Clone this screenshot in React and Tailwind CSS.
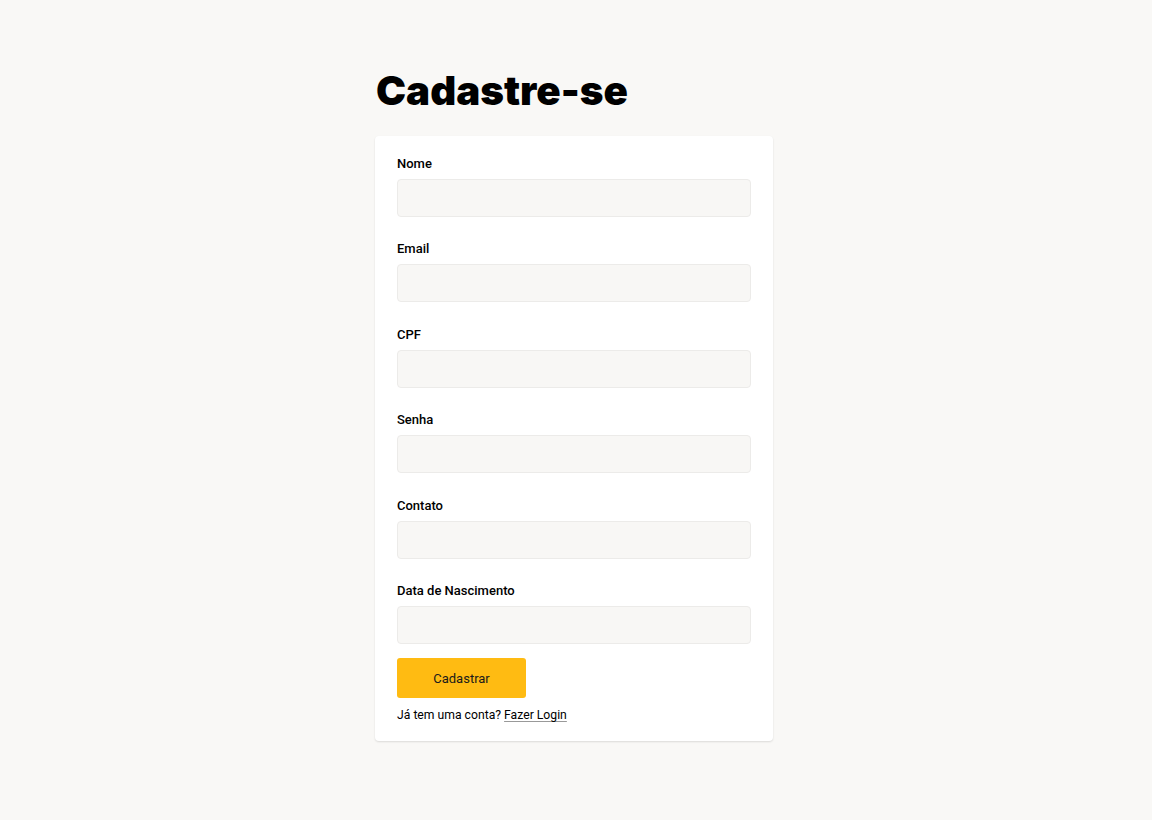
import React from "react";

const fields = ["Nome", "Email", "CPF", "Senha", "Contato", "Data de Nascimento"];

export default function App() {
  return (
    <div className="min-h-[820px] bg-[#f9f8f6] flex justify-center pr-1" style={{ fontFamily: "Roboto, 'Liberation Sans', sans-serif" }}>
      <div className="w-[398px] pt-[66px]">
        <h1 className="text-[40.3px] leading-[50px] font-black text-black pl-[1px] mb-[20px]" style={{ fontFamily: "Inter, 'DejaVu Sans', sans-serif" }}>
          Cadastre-se
        </h1>
        <div className="bg-white rounded-[4px] shadow-[0_1px_2px_rgba(0,0,0,0.12)] px-[22px] pt-[20px] pb-[18px]">
          {fields.map((f, i) => (
            <div key={f} className={i === fields.length - 1 ? "mb-[14.5px]" : "mb-[24.4px]"}>
              <label className="block text-[13px] leading-[15px] font-medium text-black mb-[8px]">
                {f}
              </label>
              <input
                className="block w-full h-[38px] bg-[#f8f7f5] border border-[#ecebe9] rounded-[4px] outline-none"
                type="text"
              />
            </div>
          ))}
          <button className="w-[129px] h-[40px] bg-[#ffbb12] rounded-[3px] text-[13px] text-[#1a1a1a]">
            Cadastrar
          </button>
          <p className="mt-[9px] text-[12.2px] leading-[16px] text-black">
            Já tem uma conta? <a className="underline decoration-[#999] underline-offset-2 cursor-pointer">Fazer Login</a>
          </p>
        </div>
      </div>
    </div>
  );
}
